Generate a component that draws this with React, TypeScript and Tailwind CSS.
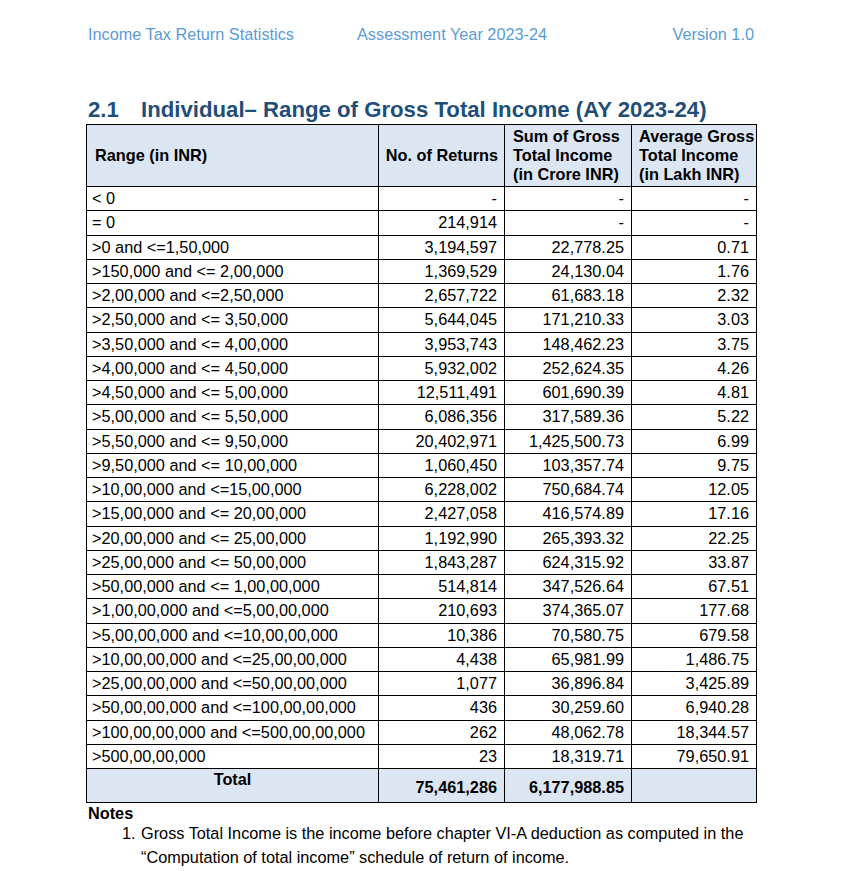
import React from "react";

const rows: [string, string, string, string][] = [
  ["< 0", "-", "-", "-"],
  ["= 0", "214,914", "-", "-"],
  [">0 and <=1,50,000", "3,194,597", "22,778.25", "0.71"],
  [">150,000 and <= 2,00,000", "1,369,529", "24,130.04", "1.76"],
  [">2,00,000 and <=2,50,000", "2,657,722", "61,683.18", "2.32"],
  [">2,50,000 and <= 3,50,000", "5,644,045", "171,210.33", "3.03"],
  [">3,50,000 and <= 4,00,000", "3,953,743", "148,462.23", "3.75"],
  [">4,00,000 and <= 4,50,000", "5,932,002", "252,624.35", "4.26"],
  [">4,50,000 and <= 5,00,000", "12,511,491", "601,690.39", "4.81"],
  [">5,00,000 and <= 5,50,000", "6,086,356", "317,589.36", "5.22"],
  [">5,50,000 and <= 9,50,000", "20,402,971", "1,425,500.73", "6.99"],
  [">9,50,000 and <= 10,00,000", "1,060,450", "103,357.74", "9.75"],
  [">10,00,000 and <=15,00,000", "6,228,002", "750,684.74", "12.05"],
  [">15,00,000 and <= 20,00,000", "2,427,058", "416,574.89", "17.16"],
  [">20,00,000 and <= 25,00,000", "1,192,990", "265,393.32", "22.25"],
  [">25,00,000 and <= 50,00,000", "1,843,287", "624,315.92", "33.87"],
  [">50,00,000 and <= 1,00,00,000", "514,814", "347,526.64", "67.51"],
  [">1,00,00,000 and <=5,00,00,000", "210,693", "374,365.07", "177.68"],
  [">5,00,00,000 and <=10,00,00,000", "10,386", "70,580.75", "679.58"],
  [">10,00,00,000 and <=25,00,00,000", "4,438", "65,981.99", "1,486.75"],
  [">25,00,00,000 and <=50,00,00,000", "1,077", "36,896.84", "3,425.89"],
  [">50,00,00,000 and <=100,00,00,000", "436", "30,259.60", "6,940.28"],
  [">100,00,00,000 and <=500,00,00,000", "262", "48,062.78", "18,344.57"],
  [">500,00,00,000", "23", "18,319.71", "79,650.91"],
];

export default function App() {
  return (
    <div
      className="w-[852px] h-[871px] bg-white text-black overflow-hidden"
      style={{ fontFamily: '"Liberation Sans", Arial, sans-serif' }}
    >
      <div className="pt-[25px] pl-[88px] pr-[98px] flex h-[44px] text-[16.3px] leading-[19px] text-[#5b9bd5]">
        <span className="w-[269px]">Income Tax Return Statistics</span>
        <span>Assessment Year 2023-24</span>
        <span className="ml-auto">Version 1.0</span>
      </div>

      <div className="mt-[51px] mb-[1px] pt-[2px] pl-[88px] h-[28px] leading-[26px] text-[22.2px] font-bold text-[#1f4e79] flex">
        <span className="w-[53px]">2.1</span>
        <span>Individual– Range of Gross Total Income (AY 2023-24)</span>
      </div>

      <table className="ml-[86px] w-[670px] table-fixed border-collapse text-[16.3px] leading-[19px]">
        <colgroup>
          <col className="w-[292px]" />
          <col className="w-[126px]" />
          <col className="w-[127px]" />
          <col className="w-[125px]" />
        </colgroup>
        <thead>
          <tr className="bg-[#dce6f2] font-bold">
            <th className="h-[62px] border border-black text-left font-bold pl-[8px] align-middle">Range (in INR)</th>
            <th className="border border-black text-right font-bold pr-[6px] align-middle whitespace-nowrap">No. of Returns</th>
            <th className="border border-black text-left font-bold pl-[8px] align-middle whitespace-nowrap">
              Sum of Gross
              <br />
              Total Income
              <br />
              (in Crore INR)
            </th>
            <th className="border border-black text-left font-bold pl-[7px] align-middle whitespace-nowrap">
              Average Gross
              <br />
              Total Income
              <br />
              (in Lakh INR)
            </th>
          </tr>
        </thead>
        <tbody>
          {rows.map((r, i) => (
            <tr key={i}>
              <td className="h-[24.25px] border border-black pl-[5px] py-0 align-middle whitespace-nowrap">{r[0]}</td>
              <td className="border border-black pr-[7px] text-right py-0 align-middle">{r[1]}</td>
              <td className="border border-black pr-[7px] text-right py-0 align-middle">{r[2]}</td>
              <td className="border border-black pr-[7px] text-right py-0 align-middle">{r[3]}</td>
            </tr>
          ))}
          <tr className="bg-[#dce6f2] font-bold">
            <td className="h-[34px] border border-black text-center align-top pt-[1px]">Total</td>
            <td className="border border-black text-right pr-[7px] align-bottom pb-[5px]">75,461,286</td>
            <td className="border border-black text-right pr-[7px] align-bottom pb-[5px]">6,177,988.85</td>
            <td className="border border-black"></td>
          </tr>
        </tbody>
      </table>

      <div className="pl-[88px] text-[16.3px] font-bold leading-[20px]">Notes</div>
      <div className="pl-[122px] flex text-[16.3px] leading-[24px] -mt-[2px]">
        <span className="w-[19px] shrink-0">1.</span>
        <span className="w-[615px]">
          Gross Total Income is the income before chapter VI-A deduction as computed in the “Computation of total
          income” schedule of return of income.
        </span>
      </div>
    </div>
  );
}
